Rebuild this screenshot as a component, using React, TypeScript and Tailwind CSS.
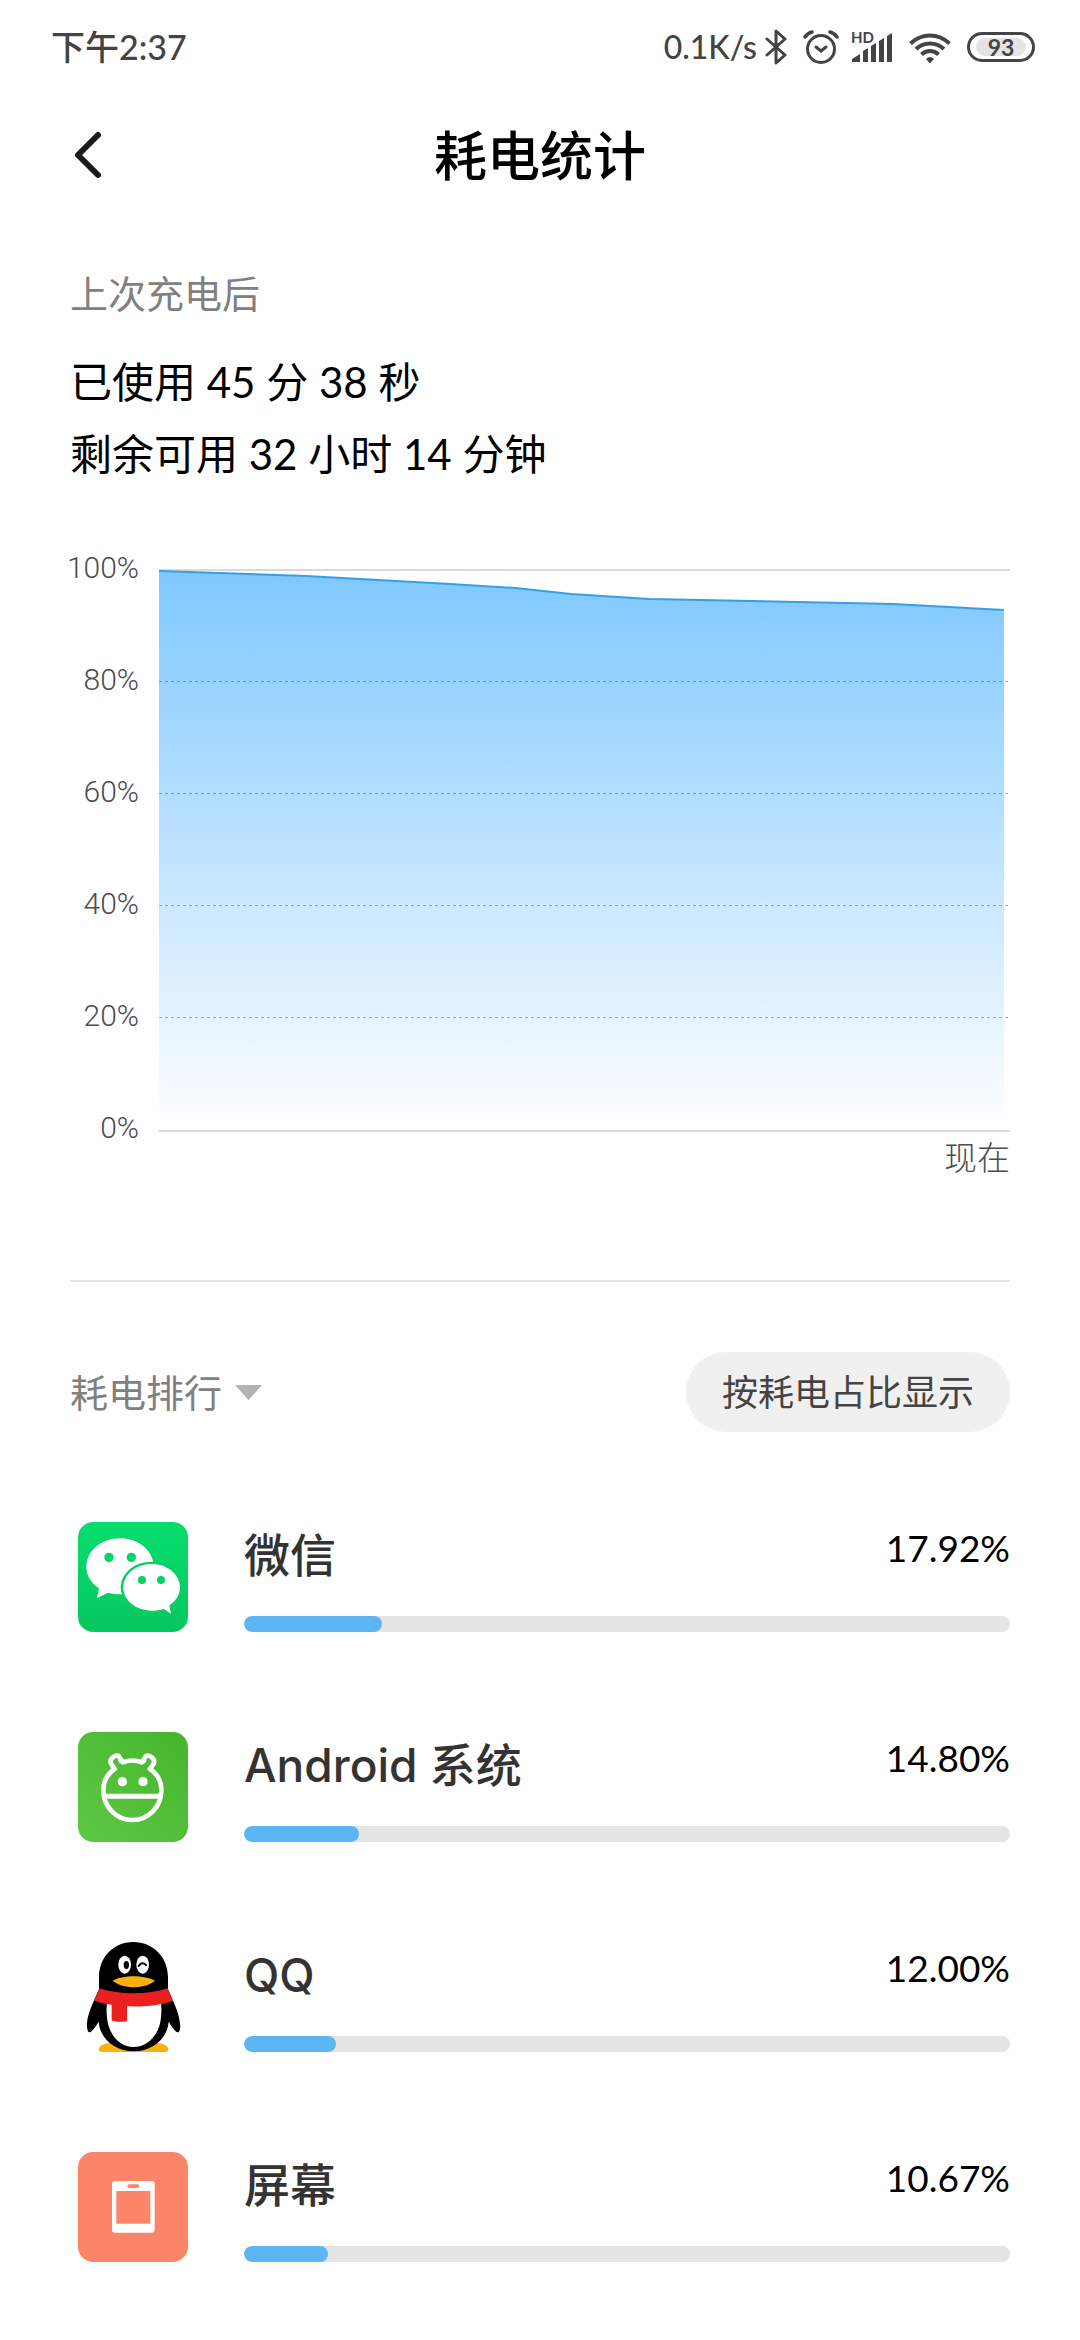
import React, { useState } from "react";

interface UsageItem {
  name: string;
  percent: number;
  icon: React.ReactNode;
}

const WeChatIcon = () => (
  <svg viewBox="54 66 330 330" className="size-[110px]" aria-hidden="true">
    <defs>
      <linearGradient id="wechat" x1="0" y1="0" x2="0" y2="1">
        <stop offset="0" stopColor="#07dd6e" />
        <stop offset="1" stopColor="#07c75f" />
      </linearGradient>
    </defs>
    <rect x="54" y="66" width="330" height="330" rx="46" fill="url(#wechat)" />
    <path
      d="M180 115c-56 0-101 38-101 85 0 26 14 49 38 65l-6 29 33-16c13 4 25 5 42 5l94-95c-7-42-50-73-100-73z"
      fill="#fff"
    />
    <ellipse cx="275" cy="262" rx="93" ry="77" fill="#07ce66" />
    <path
      d="M275 192c-47 0-85 31-85 70s38 70 85 70c13 0 25-2 36-6l22 15-5-25c20-13 32-32 32-54 0-39-38-70-85-70z"
      fill="#fff"
    />
    <circle cx="147" cy="172" r="14" fill="#07d468" />
    <circle cx="214" cy="172" r="14" fill="#07d468" />
    <circle cx="246" cy="240" r="12" fill="#07d066" />
    <circle cx="303" cy="240" r="12" fill="#07d066" />
  </svg>
);

const AndroidIcon = () => (
  <svg viewBox="54 66 330 330" className="size-[110px]" aria-hidden="true">
    <defs>
      <linearGradient id="android" x1="0" y1="1" x2="1" y2="0">
        <stop offset="0" stopColor="#5fc845" />
        <stop offset="1" stopColor="#45b52c" />
      </linearGradient>
    </defs>
    <rect x="54" y="66" width="330" height="330" rx="46" fill="url(#android)" />
    <g fill="none" stroke="#fff" strokeWidth="14">
      <path
        d="M164 177 153 161C147 148 163 134 176 138L188 157Q217 146 246 157L258 138C271 134 287 148 281 161L270 177C292 192 304 216 304 240C304 291 265 330 217 330C169 330 130 291 130 240C130 216 142 192 164 177Z"
        strokeLinejoin="round"
      />
      <path d="M132 259H302" strokeWidth="15" />
      <path d="M160 182 168 172M184 157 178 149M274 182 266 172M250 157 256 149" strokeWidth="11" />
    </g>
    <circle cx="187" cy="215" r="14" fill="#fff" />
    <circle cx="249" cy="215" r="14" fill="#fff" />
  </svg>
);

const QQIcon = () => (
  <svg viewBox="54 66 330 330" className="size-[110px]" aria-hidden="true">
    <path d="M116 389c0-11 16-20 36-20h138c20 0 35 9 35 20 0 5-5 7-12 7H128c-7 0-12-2-12-7z" fill="#fbb00f" />
    <path
      d="M220 66c-60 0-103 46-103 106v36c-14 32-34 72-36 102-1 14 2 27 7 27 7 0 18-16 28-32 4 52 50 89 105 89s101-37 105-89c10 16 21 32 28 32 5 0 8-13 6-27-3-32-22-70-36-102v-36c0-60-44-106-104-106z"
      fill="#000"
    />
    <path d="M142 240h159c4 16 4 34 2 52-4 52-40 89-82 89s-76-37-80-89c-2-18-2-36 1-52z" fill="#fff" />
    <path
      d="M119 205c58 20 144 20 204 0l16 38c-38 13-88 18-138 16v42c0 3-2 4-5 4-12 1-24 1-37-2-3-1-4-2-4-5v-44c-18-3-36-6-52-12z"
      fill="#ea2020"
    />
    <ellipse cx="194" cy="134" rx="19" ry="27" fill="#fff" />
    <ellipse cx="248" cy="134" rx="19" ry="27" fill="#fff" />
    <ellipse cx="199" cy="135" rx="8" ry="12" fill="#000" />
    <path d="M236 138q10-15 22-3" fill="none" stroke="#000" strokeWidth="6" strokeLinecap="round" />
    <path d="M158 182c30-18 96-18 127 0-30 26-97 26-127 0z" fill="#fbb00f" />
  </svg>
);

const ScreenIcon = () => (
  <svg viewBox="54 66 330 330" className="size-[110px]" aria-hidden="true">
    <rect x="54" y="66" width="330" height="330" rx="46" fill="#fb8569" />
    <rect x="156" y="153" width="128" height="155" rx="9" fill="#fff" />
    <rect x="202" y="163" width="36" height="11" rx="5" fill="#fb8569" />
    <rect x="169" y="183" width="102" height="98" fill="#fb8569" />
  </svg>
);

const usage: UsageItem[] = [
  { name: "微信", percent: 17.92, icon: <WeChatIcon /> },
  { name: "Android 系统", percent: 14.8, icon: <AndroidIcon /> },
  { name: "QQ", percent: 12, icon: <QQIcon /> },
  { name: "屏幕", percent: 10.67, icon: <ScreenIcon /> },
];

const ticks = [100, 80, 60, 40, 20, 0];

const StatusBar = () => (
  <div className="flex h-[94px] items-center justify-between pl-[51px] pr-[45px] text-[34px] font-medium leading-none text-[#444]">
    <span>下午2:37</span>
    <div className="flex items-center">
      <span className="mr-2 text-[32px]">0.1K/s</span>
      <svg viewBox="0 0 22 36" className="mr-4 h-9 w-[22px]" fill="none" stroke="#444" strokeWidth="3" strokeLinejoin="round" strokeLinecap="round" aria-hidden="true">
        <path d="M2 10 20 26 11 34V2l9 8L2 26" />
      </svg>
      <svg viewBox="0 0 36 36" className="mr-3 size-9" fill="none" stroke="#444" strokeWidth="3" strokeLinecap="round" aria-hidden="true">
        <circle cx="18" cy="20" r="13.5" />
        <path d="M2 8Q5 4 9 3M27 3q4 1 7 5" strokeWidth="3.5" />
        <path d="m13 18 5 4 5-4" />
      </svg>
      <svg viewBox="0 0 42 36" className="mr-4 h-9 w-[42px]" fill="#444" aria-hidden="true">
        <text x="0" y="14" fontSize="15" fontWeight="700" fontFamily="Lato, sans-serif">HD</text>
        <path d="M1 33v-3l8-5v8zM12 33V22l5-3v14zM20 33V17l5-3v19zM28 33V12l5-3v24zM36 33V7l5-3v29z" />
      </svg>
      <svg viewBox="0 0 42 36" className="mr-4 h-9 w-[42px]" fill="none" stroke="#444" strokeWidth="4" aria-hidden="true">
        <path d="M1.500 14.500Q10 6.500 21 6.500t19.500 8M7 20q6-5.500 14-5.500T35 20M12.500 25.500q3.500-3.500 8.500-3.500t8.500 3.500" />
        <path d="M17 30q4-4 8 0l-4 4.500z" fill="#444" stroke="none" />
      </svg>
      <div className="flex h-[30px] w-[68px] items-center rounded-full border-3 border-[#444] px-[6px]">
        <span className="flex h-[18px] w-full items-center justify-center rounded-full bg-[#e4e4e4] text-[23px] font-bold leading-none">
          93
        </span>
      </div>
    </div>
  </div>
);

const BatteryChart = () => (
  <div>
    <div className="flex">
      <div className="mt-px flex h-[600px] w-[69px] shrink-0 flex-col items-end justify-between font-[Roboto] text-[30px] font-light leading-10 text-[#4d4d4d]">
        {ticks.map((tick) => (
          <span key={tick}>{tick}%</span>
        ))}
      </div>
      <svg
        viewBox="0 0 851 564"
        preserveAspectRatio="none"
        className="ml-5 mt-[21px] h-[564px] min-w-0 flex-1"
        role="img"
        aria-label="电量曲线"
      >
        <defs>
          <linearGradient id="battery" gradientUnits="userSpaceOnUse" x1="0" y1="2" x2="0" y2="562">
            <stop offset="0" stopColor="#7ec8ff" />
            <stop offset="1" stopColor="#fff" />
          </linearGradient>
        </defs>
        <path d="M0 2H851" stroke="#d9d9d9" strokeWidth="2" />
        <path
          d="M0 3 147 8 291 16 356 20 412 26 490 31 734 36 845 42V562H0Z"
          fill="url(#battery)"
        />
        <path
          d="M0 3 147 8 291 16 356 20 412 26 490 31 734 36 845 42"
          fill="none"
          stroke="#359fe6"
          strokeWidth="2"
        />
        <path
          d="M0 113.500H851M0 225.500H851M0 337.500H851M0 449.500H851"
          stroke="#000"
          strokeOpacity="0.3"
          strokeDasharray="3 3"
        />
        <path d="M0 563H851" stroke="#d9d9d9" strokeWidth="2" />
      </svg>
    </div>
    <p className="text-right text-[33px] font-light leading-[18px] text-[#4d4d4d]">现在</p>
  </div>
);

const UsageRow: React.FC<{ item: UsageItem }> = ({ item }) => (
  <li className="flex h-[110px] items-start pl-2">
    <div className="shrink-0">{item.icon}</div>
    <div className="ml-14 flex h-full min-w-0 flex-1 flex-col justify-between">
      <div className="flex items-start justify-between">
        <span className="font-[Inter,'Noto_Sans_CJK_SC',sans-serif] text-[46px] font-medium leading-[66px] text-[#333]">
          {item.name}
        </span>
        <span className="text-[37px] leading-[52px] text-black">{item.percent.toFixed(2)}%</span>
      </div>
      <div
        role="progressbar"
        aria-label={item.name}
        aria-valuenow={item.percent}
        className="h-4 overflow-hidden rounded-full bg-[#e5e5e5]"
      >
        <div
          className="h-full rounded-full bg-[#5cb6f4]"
          style={{ width: `${Math.round(item.percent)}%` }}
        />
      </div>
    </div>
  </li>
);

const App: React.FC = () => {
  const [sort, setSort] = useState<string>("usage");

  return (
    <div className="min-h-screen bg-[#fefefe] font-[Lato,'Noto_Sans_CJK_SC',sans-serif] text-black">
      <StatusBar />
      <header className="grid h-[122px] grid-cols-[1fr_auto_1fr] items-center px-[70px]">
        <button type="button" aria-label="返回" className="justify-self-start">
          <svg viewBox="0 0 36 50" className="h-[50px] w-9" fill="none" stroke="#1a1a1a" strokeWidth="6" strokeLinecap="round" strokeLinejoin="round" aria-hidden="true">
            <path d="M28 5 8 25l20 20" />
          </svg>
        </button>
        <h1 className="text-[53px] font-medium leading-none">耗电统计</h1>
      </header>

      <main className="px-[70px]">
        <section className="pt-[50px]">
          <p className="text-[38px] leading-[54px] text-[#808080]">上次充电后</p>
          <div className="mt-[26px] text-[42px] leading-[72px]">
            <p>已使用 45 分 38 秒</p>
            <p>剩余可用 32 小时 14 分钟</p>
          </div>
        </section>

        <section className="border-b-2 border-[#e6e6e6] pb-[114px] pt-[57px]">
          <BatteryChart />
        </section>

        <section className="pt-[70px]">
          <div className="flex items-center justify-between">
            <label className="flex items-center">
              <select
                value={sort}
                onChange={(e) => setSort(e.target.value)}
                aria-label="排行方式"
                className="appearance-none bg-transparent text-[38px] leading-[54px] text-[#808080]"
              >
                <option value="usage">耗电排行</option>
              </select>
              <svg viewBox="0 0 27 15" className="ml-3 h-[15px] w-[27px]" fill="#b3b3b3" aria-hidden="true">
                <path d="M0 0h27L13.500 15z" />
              </svg>
            </label>
            <button
              type="button"
              className="h-20 rounded-full bg-[#f0f0f0] px-9 text-[36px] text-[#444]"
            >
              按耗电占比显示
            </button>
          </div>

          <ul className="mt-[90px] flex flex-col gap-[100px] pb-12">
            {usage.map((item) => (
              <UsageRow key={item.name} item={item} />
            ))}
          </ul>
        </section>
      </main>
    </div>
  );
};

export default App;
